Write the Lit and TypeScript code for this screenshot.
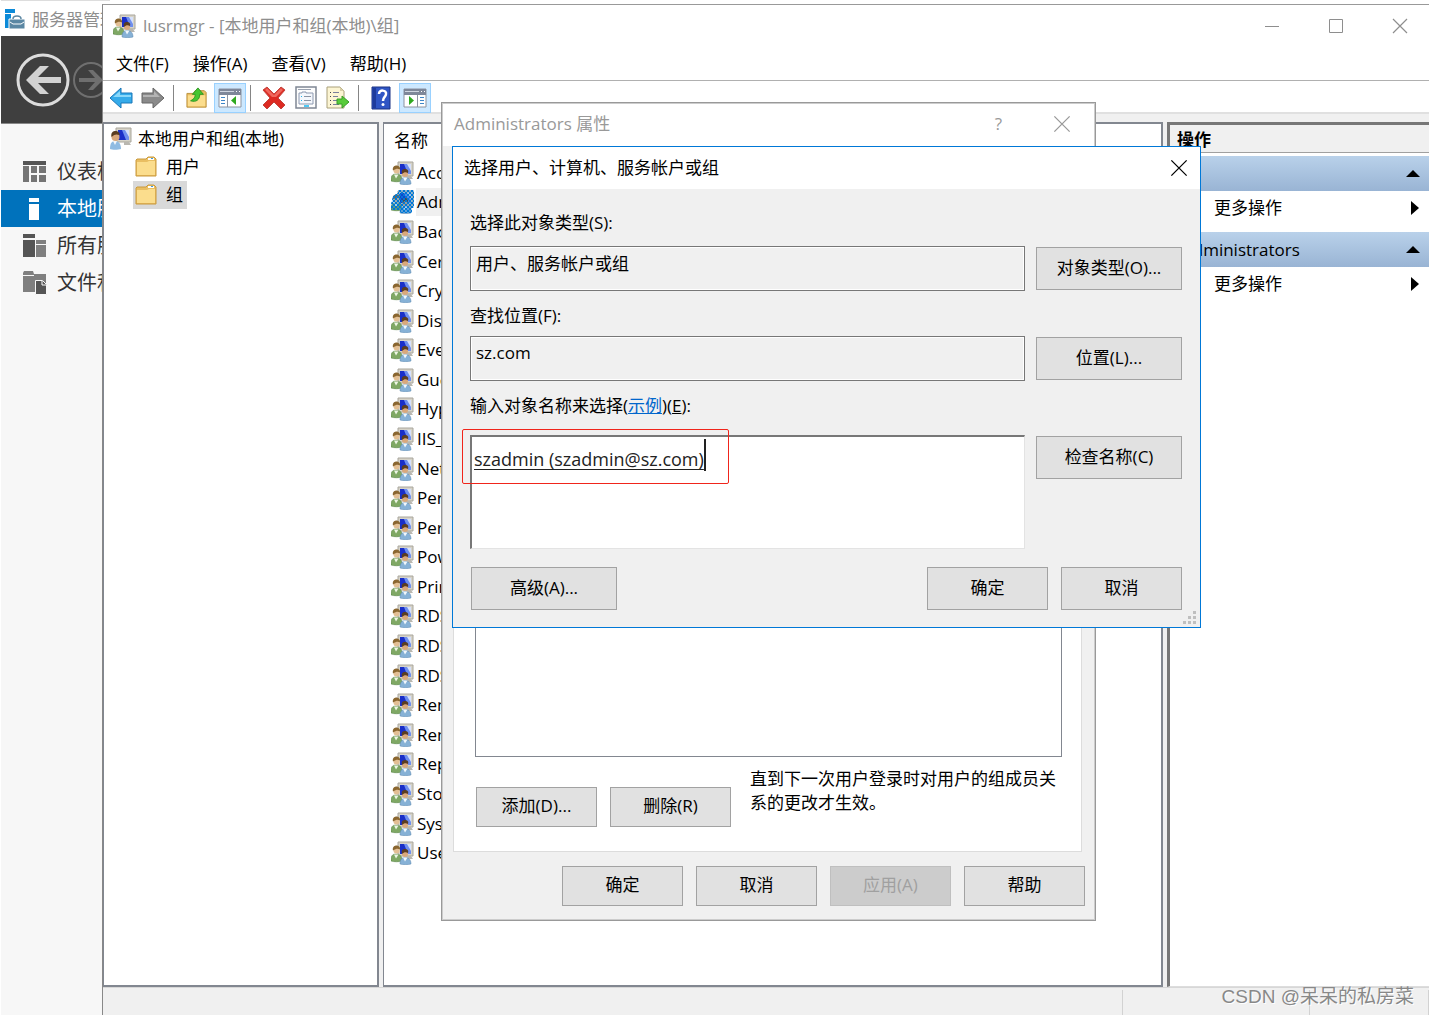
import { LitElement, html, svg, css } from "lit";
import { customElement, property } from "lit/decorators.js";

const GROUPS = [
  "Access Control Assistance Operators", "Administrators", "Backup Operators",
  "Certificate Service DCOM Access", "Cryptographic Operators", "Distributed COM Users",
  "Event Log Readers", "Guests", "Hyper-V Administrators", "IIS_IUSRS",
  "Network Configuration Operators", "Performance Log Users", "Performance Monitor Users",
  "Power Users", "Print Operators", "RDS Endpoint Servers", "RDS Management Servers",
  "RDS Remote Access Servers", "Remote Desktop Users", "Remote Management Users",
  "Replicator", "Storage Replica Administrators", "System Managed Accounts Group", "Users",
];

const monitor = svg`
  <path d="M7 1h15v14H7z" fill="#d6d3c8" stroke="#a9a69c" stroke-width="1"/>
  <path d="M9 3h11v10H9z" fill="#1a2fc8"/>
  <path d="M13 3h7v10h-3z" fill="#6f8fee"/>
  <path d="M16 3h4v7z" fill="#d5e0fb"/>
  <path d="M15 15h5l2 3h-7z" fill="#b9b7b0"/>`;

const people = svg`${monitor}
  <path d="M0 20c0-5 1-7 5-7s6 2 6 7c-3 1-8 1-11 0z" fill="#7fa864" stroke="#4d7a3a" stroke-width=".5"/>
  <path d="M3 13.500l2 4 2.500-4z" fill="#eef5e6"/>
  <circle cx="5.500" cy="9.500" r="3" fill="#e3bf94"/>
  <path d="M2 9.500c-1-4 2-5 3.500-5s4 1 3.500 4c-2-1.500-4-1-7 1z" fill="#8a6630"/>
  <path d="M9 23c0-5 2-6.500 5-6.500s6 1.500 6 6.500c-3 1-8 1-11 0z" fill="#86b1d6" stroke="#5a86ae" stroke-width=".5"/>
  <path d="M12 16.500l2 4 2.500-4z" fill="#f2f7fb"/>
  <circle cx="14" cy="13" r="3" fill="#d9a87c"/>
  <path d="M11 13c-1-4 1-5 3-5s4 1 3 4c-2-1-4-1-6 1z" fill="#5a3d22"/>`;

const ICONS: Record<string, unknown> = {
  group: people,
  groupsel: svg`
    <defs><pattern id="dither" width="4" height="4" patternUnits="userSpaceOnUse">
      <path d="M0 0h2v2H0zM2 2h2v2H2z" fill="#0078d7" shape-rendering="crispEdges"/></pattern></defs>
    ${people}
    <path d="M7 0h16v18h-2v5H9v-3H0v-6l2-8 5-3z" fill="#0078d7" opacity=".3"/>
    <path d="M7 0h16v18h-2v5H9v-3H0v-6l2-8 5-3z" fill="url(#dither)"/>`,
  user: svg`${monitor}
    <path d="M1 22c0-6 2-8 5-8s6 2 6 8c-3 1-9 1-11 0z" fill="#8fbbe2"/>
    <path d="M4 14l2 4 2-4z" fill="#f2f7fb"/>
    <circle cx="6.500" cy="10" r="4" fill="#d9a87c"/>
    <path d="M2.500 10c-1-5 2-6 4-6s5 2 4 4c-3-1-5-1-8 2z" fill="#5a3d22"/>`,
  folder: svg`
    <path d="M2 5l1-1h9l2-2h6l2 2v17H2z" fill="#e9be62" stroke="#c9993c"/>
    <path d="M14 3h6v2h-6z" fill="#fff"/><path d="M17 3h2v1h-2z" fill="#3f9be0"/>
    <path d="M3 7h10l2-1h6v14H3z" fill="#fbdd8d"/>`,
  up: svg`
    <path d="M1 7h7l2-3h10l2 2v16H1z" fill="#e9be62" stroke="#b98d38"/>
    <path d="M2 9h19v12H2z" fill="#fbdd8d"/>
    <path d="M5 15c4-2 5-4 5-7H7l6-7 6 7h-4c0 6-4 9-10 7z" fill="#45c631" stroke="#2a9420"/>`,
  back: svg`<path d="M1 12L12 2v5h11v10H12v5z" fill="#35abea" stroke="#1976b8"/><path d="M4 11l7-6v4h11v2z" fill="#8ad8fa"/>`,
  next: svg`<path d="M23 12L12 2v5H1v10h11v5z" fill="#8a8a8a" stroke="#666"/><path d="M2 9h11V5l6 6H2z" fill="#b4b4b4"/>`,
  tree: svg`
    <path d="M1 3h22v18H1z" fill="#fff" stroke="#8c93a0"/><path d="M1 3h22v6H1z" fill="#7e8799"/>
    <path d="M2 5h14v1H2z" fill="#cfd5e0"/><path d="M18 5h1v1h-1zM21 5h1v1h-1z" fill="#fff"/>
    <path d="M9 9h1v12H9z" fill="#8c93a0"/>
    <path d="M3 11h4v1H3zM3 14h4v1H3zM3 17h4v1H3z" fill="#3e86c8"/><path d="M18 10v9l-5-4.500z" fill="#2fa91f"/>`,
  pane: svg`
    <path d="M1 3h22v18H1z" fill="#fff" stroke="#8c93a0"/><path d="M1 3h22v6H1z" fill="#7e8799"/>
    <path d="M2 5h14v1H2z" fill="#cfd5e0"/><path d="M18 5h1v1h-1zM21 5h1v1h-1z" fill="#fff"/>
    <path d="M14 9h1v12h-1z" fill="#8c93a0"/>
    <path d="M17 11h4v1h-4zM17 14h4v1h-4zM17 17h4v1h-4z" fill="#3e86c8"/><path d="M6 10v9l5-4.500z" fill="#2fa91f"/>`,
  remove: svg`<path d="M1 4l4-3 7 7 7-7 4 3-7 8 7 7-4 4-7-7-7 7-4-4 7-7z" fill="#dd2a22" stroke="#c2453d"/><path d="M3 4l2-2 7 7 7-7 2 2-7 7h-4z" fill="#f0675d"/>`,
  props: svg`
    <path d="M2 1h20v21H2z" fill="#fdfdfd" stroke="#7f8794" stroke-width="1.500"/><path d="M4 3h13v1H4z" fill="#9aa2b0"/>
    <path d="M5 7h3V6h4v1h7v11H5z" fill="#f4f7fc" stroke="#8d99b0"/>
    <path d="M7 10h1v1H7zM7 14h1v1H7z" fill="#22b7ee"/><path d="M10 10h7v1h-7zM10 14h7v1h-7z" fill="#8b93a3"/><path d="M10 19h5v2h-5z" fill="#4ec8f4"/>`,
  exporter: svg`
    <path d="M1 1h13l4 4v17H1z" fill="#fcf5d3" stroke="#a9a07a"/><path d="M14 1v4h4z" fill="#d8cfa6"/>
    <path d="M4 6h1v1H4zM4 10h1v1H4zM4 14h1v1H4zM4 18h1v1H4z" fill="#444"/>
    <path d="M7 6h6v1H7zM7 10h5v1H7zM7 14h4v1H7zM7 18h6v1H7z" fill="#7a7f9c"/>
    <path d="M11 13h5v-3l7 6-7 6v-4h-5z" fill="#58cb3a" stroke="#3a9e28"/>`,
  help: svg`<path d="M2 1h18v22H2z" fill="#2f55c4" stroke="#1a3284"/><path d="M3 2h3v20H3z" fill="#1e3b9c"/>
    <path d="M9 8c0-5 8-4 7 0 0 3-3 3-3 7" fill="none" stroke="#fff" stroke-width="2.500"/><circle cx="13" cy="18.500" r="1.500" fill="#fff"/>`,
  manager: svg`<path d="M1 1h10v4H1zM1 6h6v14H1z" fill="#0c8ad8"/><path d="M5 11h16v10H5z" fill="#5b87a3" stroke="#fff"/>
    <path d="M9 11c0-4 8-4 8 0" fill="none" stroke="#5b87a3" stroke-width="1.500"/><path d="M6 14l3 2h8l3-2" fill="none" stroke="#fff"/>`,
  dashboard: svg`<path d="M0 1h23v4H0z" fill="#555"/><path d="M0 6h6v16H0zM8 6h6v7H8zM16 6h7v7h-7zM8 15h6v7H8zM16 15h7v7h-7z" fill="#757575"/>`,
  local: svg`<path d="M6 1h10v4H6zM6 7h10v16H6z" fill="#fff"/>`,
  all: svg`<path d="M0 0h12v4H0zM0 6h12v17H0z" fill="#555"/><path d="M13 6h10v4H13zM13 11h10v12H13z" fill="#7f7f7f"/>`,
  files: svg`<path d="M0 2l1-2h9l1 3h12v10h-9v8H0z" fill="#7f7f7f"/><path d="M0 4.500h11" stroke="#f7f7f7"/><path d="M12.500 9.500h7l4 4v10h-11z" fill="#555" stroke="#f7f7f7"/><path d="M19 10v4h4" fill="none" stroke="#fff"/>`,
  close: svg`<path d="M4 4l14 14M18 4L4 18" fill="none" stroke="currentColor" stroke-width="1.200"/>`,
  max: svg`<path d="M4.500 4.500h13v13h-13z" fill="none" stroke="currentColor"/>`,
  min: svg`<path d="M4 11.500h14" stroke="currentColor"/>`,
  caret: svg`<path d="M4 14l7-7 7 7z" fill="#000"/>`,
  more: svg`<path d="M8 4l8 7-8 7z" fill="#000"/>`,
  backring: svg`<circle cx="27" cy="27" r="25" fill="none" stroke="#dcdcdc" stroke-width="3"/><path d="M10 27L24 13h9L22 24h23v6H22l11 11h-9z" fill="#d2d2d2"/>`,
  nextring: svg`<circle cx="18" cy="18" r="17" fill="none" stroke="#6f6f6f" stroke-width="2"/><path d="M30 18L20 8h-5l7 8H6v4h16l-7 8h5z" fill="#6f6f6f"/>`,
};

const icon = (name: string, size = 24, box = 24) =>
  html`<svg width=${size} height=${size} viewBox="0 0 ${box} ${box}" aria-hidden="true">${ICONS[name]}</svg>`;

const shared = css`
  :host, * { box-sizing: border-box; }
  svg { display: block; flex: none; }
  button { font: inherit; color: inherit; margin: 0; padding: 0; border: 0; background: none; display: grid; place-items: center; }
  .push { height: 40px; border: 1px solid #a2a2a2; background: #e1e1e1; white-space: nowrap; width: 121px; padding-bottom: 2px; }
  .push:disabled { color: #a0a0a0; background: #cccccc; border-color: #bfbfbf; }
  .grow { flex: 1; }
`;

@customElement("server-manager")
export class ServerManager extends LitElement {
  static styles = [shared, css`
    :host { display: flex; flex-direction: column; background: #f7f7f7; white-space: nowrap; overflow: hidden; border-left: 1px solid #fff; }
    .title { display: flex; align-items: center; gap: 4px; height: 36px; padding: 2px 0 0 3px; background: #fff; color: #8e8e8e; border-top: 1px solid #ddd; }
    .nav { display: flex; align-items: center; gap: 3px; height: 88px; padding-left: 15px; background: #3f3f3f; border-bottom: 1px solid #888; }
    .menu { display: flex; flex-direction: column; padding-top: 29px; font-size: 20px; color: #333; }
    .item { display: flex; align-items: center; gap: 10px; height: 37px; padding-left: 22px; color: inherit; text-decoration: none; }
    .current { background: #0072bc; color: #fff; }
  `];
  render() {
    return html`
      <div class="title">${icon("manager")}<span>服务器管理器</span></div>
      <div class="nav">
        <button aria-label="后退">${icon("backring", 54, 54)}</button>
        <button aria-label="前进">${icon("nextring", 36, 36)}</button>
      </div>
      <nav class="menu">
        <a class="item" href="#">${icon("dashboard")}仪表板</a>
        <a class="item current" href="#">${icon("local")}本地服务器</a>
        <a class="item" href="#">${icon("all")}所有服务器</a>
        <a class="item" href="#">${icon("files")}文件和存储服务</a>
      </nav>`;
  }
}

@customElement("lusrmgr-window")
export class LusrmgrWindow extends LitElement {
  static styles = [shared, css`
    :host { display: flex; flex-direction: column; background: #fff; border-top: 1px solid #999; border-left: 1px solid #888; white-space: nowrap; overflow: hidden; }
    .title { display: flex; align-items: center; gap: 6px; height: 41px; padding: 0 18px 0 10px; color: #8e8e8e; }
    .controls { display: flex; gap: 42px; }
    .menus { display: flex; gap: 24px; height: 35px; padding: 2px 0 0 13px; align-items: center; border-bottom: 1px solid #b0b0b0; }
    .tools { display: flex; align-items: center; height: 33px; padding: 2px 0 0 2px; border-bottom: 2px solid #e0e0e0; }
    .tool { width: 32px; height: 30px; }
    .on { margin-left: 1px; background: #cce8ff; border: 1px solid #99d1ff; }
    .sep { width: 1px; height: 26px; background: #858585; margin: 0 7px 0 4px; }
    .panes { flex: 1; min-height: 0; display: grid; grid-template-columns: 276px minmax(0, 1fr) 262px; gap: 4px; padding-top: 8px; background: #f0f0f0; }
    .pane { background: #fff; border: 2px solid #828790; overflow: hidden; border-left-width: 1px; }
    .tree { padding: 1px 4px; }
    .node { display: flex; align-items: center; gap: 5px; width: max-content; height: 28px; padding: 0 4px 0 1px; }
    .child { margin-left: 25px; gap: 8px; }
    .picked { background: #d9d9d9; }
    table { border-collapse: collapse; width: 100%; height: 744px; }
    th { height: 34px; padding: 0 0 1px 10px; text-align: left; font-weight: 400; }
    td { padding: 0 0 0 7px; }
    .group { display: flex; align-items: center; gap: 1px; }
    .name { flex: 1; padding: 2px 0 2px 1px; }
    .sel { background: #f0f0f0; }
    .actions { border: 0; border-top: 3px solid #777; border-left: 3px solid #777; border-bottom: 1px solid #ddd; }
    .head { height: 28px; padding: 3px 7px 0; background: #f0f0f0; border-bottom: 1px solid #a0a0a0; font-weight: 700; }
    .band { display: flex; align-items: center; height: 35px; padding: 0 5px 0 12px; background: linear-gradient(#b9d1ea, #99b4d4); }
    .more { display: flex; align-items: center; height: 41px; width: 100%; padding: 0 4px 8px 44px; text-align: left; }
    .list { padding-top: 3px; }
    .status { display: flex; justify-content: flex-end; height: 28px; background: #f0f0f0; border-top: 1px solid #d7d7d7; }
    .cell { width: 187px; border-left: 1px solid #d2d2d2; margin-top: 2px; }
    .last { width: 120px; border-right: 1px solid #d2d2d2; }
  `];
  render() {
    return html`
      <header class="title">
        ${icon("group")}<span class="grow">lusrmgr - [本地用户和组(本地)\\组]</span>
        <div class="controls">
          <button aria-label="最小化">${icon("min", 22, 22)}</button>
          <button aria-label="最大化">${icon("max", 22, 22)}</button>
          <button aria-label="关闭">${icon("close", 22, 22)}</button>
        </div>
      </header>
      <nav class="menus">
        <button>文件(F)</button><button>操作(A)</button><button>查看(V)</button><button>帮助(H)</button>
      </nav>
      <div class="tools" role="toolbar">
        <button class="tool" aria-label="后退">${icon("back")}</button>
        <button class="tool" aria-label="前进">${icon("next")}</button>
        <span class="sep"></span>
        <button class="tool" aria-label="上一级">${icon("up", 22)}</button>
        <button class="tool on" aria-label="控制台树">${icon("tree")}</button>
        <span class="sep"></span>
        <button class="tool" aria-label="删除">${icon("remove")}</button>
        <button class="tool" aria-label="属性">${icon("props")}</button>
        <button class="tool" aria-label="导出列表">${icon("exporter")}</button>
        <span class="sep"></span>
        <button class="tool" aria-label="帮助">${icon("help")}</button>
        <button class="tool on" aria-label="操作窗格">${icon("pane")}</button>
      </div>
      <div class="panes">
        <section class="pane tree">
          <div class="node">${icon("user")}本地用户和组(本地)</div>
          <div class="node child">${icon("folder")}用户</div>
          <div class="node child picked">${icon("folder")}组</div>
        </section>
        <section class="pane">
          <table>
            <thead><tr><th>名称</th></tr></thead>
            <tbody>
              ${GROUPS.map((name, i) => html`<tr><td><div class="group">
                ${icon(i === 1 ? "groupsel" : "group")}
                <span class="name ${i === 1 ? "sel" : ""}">${name}</span></div></td></tr>`)}
            </tbody>
          </table>
        </section>
        <aside class="pane actions">
          <div class="head">操作</div>
          <div class="list">
            <div class="band"><span class="grow">组</span>${icon("caret", 22, 22)}</div>
            <button class="more"><span class="grow">更多操作</span>${icon("more", 22, 22)}</button>
            <div class="band"><span class="grow">Administrators</span>${icon("caret", 22, 22)}</div>
            <button class="more"><span class="grow">更多操作</span>${icon("more", 22, 22)}</button>
          </div>
        </aside>
      </div>
      <footer class="status"><span class="cell"></span><span class="cell last"></span></footer>`;
  }
}

@customElement("group-properties")
export class GroupProperties extends LitElement {
  static styles = [shared, css`
    :host { display: flex; flex-direction: column; background: #f0f0f0; border: 1px solid #999; outline: 1px solid #ccc; outline-offset: -2px; }
    .title { display: flex; align-items: center; gap: 48px; height: 43px; padding: 0 21px 2px 12px; background: #fff; color: #999; }
    .sheet { flex: 1; display: flex; flex-direction: column; margin: 0 13px 14px 11px; padding: 0 19px 24px 21px; background: #fff; border: 1px solid #dcdcdc; }
    .members { flex: 1; margin-bottom: 30px; border: 1px solid #828790; }
    .row { display: flex; gap: 13px; padding-left: 1px; }
    .note { width: 310px; margin: -20px 0 0 6px; line-height: 24px; }
    .foot { display: flex; justify-content: flex-end; gap: 13px; padding: 0 10px 14px; }
  `];
  render() {
    return html`
      <header class="title"><span class="grow">Administrators 属性</span>
        <button aria-label="帮助">?</button><button aria-label="关闭">${icon("close", 24, 22)}</button></header>
      <div class="sheet">
        <div class="members"></div>
        <div class="row">
          <button class="push">添加(D)...</button><button class="push">删除(R)</button>
          <p class="note">直到下一次用户登录时对用户的组成员关系的更改才生效。</p>
        </div>
      </div>
      <div class="foot">
        <button class="push">确定</button><button class="push">取消</button>
        <button class="push" disabled>应用(A)</button><button class="push">帮助</button>
      </div>`;
  }
}

@customElement("object-picker")
export class ObjectPicker extends LitElement {
  @property() names = "szadmin (szadmin@sz.com)";
  static styles = [shared, css`
    :host { display: block; background: #f0f0f0; border: 1px solid #0078d7; }
    .title { display: flex; align-items: center; height: 42px; padding: 0 9px 0 11px; background: #fff; }
    .body { padding: 22px 18px 17px 17px; position: relative; }
    .push { height: 43px; }
    .form { display: grid; grid-template-columns: minmax(0, 1fr) 146px; column-gap: 11px; }
    .form .push { width: auto; margin-top: 1px; }
    .label { display: block; grid-column: 1 / -1; height: 35px; line-height: 24px; }
    .label.near { height: 32px; }
    .label.far { height: 41px; }
    .field { font: inherit; color: inherit; width: 100%; height: 45px; margin: 0 0 13px; padding: 0 5px 12px; border: 1px solid #777; outline: 1px solid #fff; outline-offset: -2px; background: #f0f0f0; border-radius: 0; }
    a { color: #0066cc; }
    .names { display: block; font: inherit; font-size: 18px; color: #222; width: 100%; height: 114px; resize: none; overflow: hidden; padding: 10px 2px; border: 1px solid #e3e3e3; border-top: 2px solid #777; border-left: 2px solid #777; border-radius: 0; outline: none; background: #fff; text-decoration: underline; text-underline-offset: 3px; line-height: 24px; }
    .caret { position: absolute; left: 251px; top: 250px; width: 2px; height: 32px; background: #222; }
    .mark { position: absolute; left: 9px; top: 240px; width: 267px; height: 55px; border: 1px solid #f0251b; border-radius: 2px; }
    .foot { display: flex; gap: 13px; padding: 18px 0 0 1px; }
    .wide { width: 146px; }
    .grip { position: absolute; right: 3px; bottom: 3px; }
  `];
  render() {
    return html`
      <header class="title"><span class="grow">选择用户、计算机、服务帐户或组</span><button aria-label="关闭">${icon("close", 24, 22)}</button></header>
      <div class="body">
        <div class="form">
          <label class="label" for="type">选择此对象类型(S):</label>
          <input class="field" id="type" readonly value="用户、服务帐户或组"><button class="push">对象类型(O)...</button>
          <label class="label near" for="place">查找位置(F):</label>
          <input class="field" id="place" readonly value="sz.com"><button class="push">位置(L)...</button>
          <label class="label far" for="names">输入对象名称来选择(<a href="#">示例</a>)(<u>E</u>):</label>
          <textarea class="names" id="names" spellcheck="false" .value=${this.names}></textarea><button class="push">检查名称(C)</button>
        </div>
        <div class="foot">
          <button class="push wide">高级(A)...</button><span class="grow"></span>
          <button class="push">确定</button><button class="push">取消</button>
        </div>
        <span class="caret"></span><span class="mark"></span>
        <svg class="grip" width="14" height="14" viewBox="0 0 14 14" aria-hidden="true">
          <path d="M10 1h3v3h-3zM5 6h3v3H5zM10 6h3v3h-3zM0 11h3v3H0zM5 11h3v3H5zM10 11h3v3h-3z" fill="#bfbfbf"/></svg>
      </div>`;
  }
}

@customElement("app-root")
export class AppRoot extends LitElement {
  static styles = css`
    :host { display: block; position: relative; height: 100vh; overflow: hidden; background: #fff; color: #000;
      font: 17px/24px "Open Sans", "Noto Sans CJK SC", sans-serif; }
    .server { position: absolute; left: 0; top: 0; bottom: 0; width: 110px; }
    .console { position: absolute; left: 102px; top: 4px; right: 0; bottom: 0; }
    .props { position: absolute; left: 441px; top: 102px; width: 655px; height: 819px; }
    .picker { position: absolute; left: 452px; top: 146px; width: 749px; }
    .water { position: absolute; right: 15px; bottom: 6px; font-family: "Liberation Sans", "Noto Sans CJK SC", sans-serif; font-size: 19px; color: #888; text-shadow: 1px 1px 0 #fff; }
  `;
  render() {
    return html`
      <server-manager class="server"></server-manager>
      <lusrmgr-window class="console"></lusrmgr-window>
      <group-properties class="props"></group-properties>
      <object-picker class="picker"></object-picker>
      <span class="water">CSDN @呆呆的私房菜</span>`;
  }
}
